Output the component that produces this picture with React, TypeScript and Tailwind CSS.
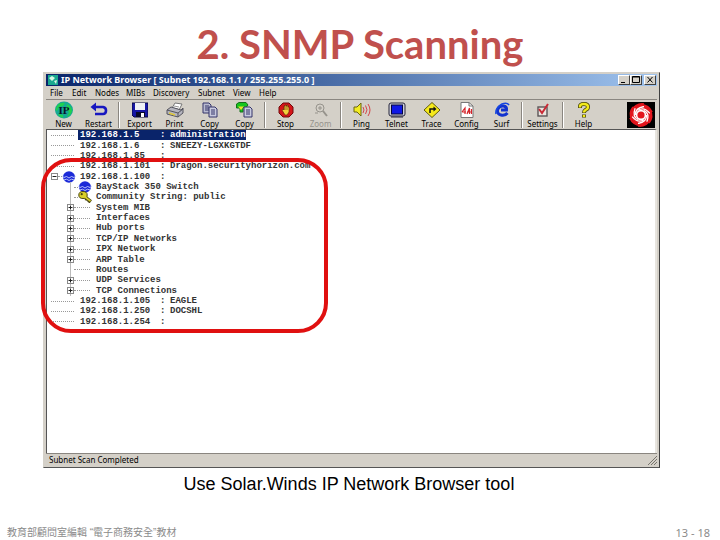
import type { ReactNode } from "react";

type TTool = {
	label: string;
	icon: ReactNode;
	disabled?: boolean;
};

type TNode = {
	text: string;
	name?: string;
	level: 0 | 1;
	expand?: "+" | "-";
	icon?: "router" | "key";
	selected?: boolean;
	host?: boolean;
};

const menus = [
	{ label: "File", width: "w-[22px]" },
	{ label: "Edit", width: "w-[23px]" },
	{ label: "Nodes", width: "w-[31px]" },
	{ label: "MIBs", width: "w-[27px]" },
	{ label: "Discovery", width: "w-[45px]" },
	{ label: "Subnet", width: "w-[35px]" },
	{ label: "View", width: "w-[26px]" },
	{ label: "Help", width: "w-[24px]" },
];

const NewIcon = () => (
	<svg viewBox="0 0 20 18" className="w-5 h-[18px]">
		<ellipse cx="10" cy="9" rx="9" ry="8.5" fill="#17a894" />
		<path
			d="M3 5 Q6 1 11 2 L9 5 L5 6 L3 10 L1.500 9Z M13 3 Q18 5 18 10 Q17 14 13 16 L15 11 L12 8Z M5 13 L9 14 L9 17 Q6 16 4 14Z"
			fill="#1fd04f"
		/>
		<text
			x="10"
			y="13"
			textAnchor="middle"
			fontSize="11"
			fontWeight="700"
			fontFamily="Liberation Serif, serif"
			fill="#06162b">
			IP
		</text>
	</svg>
);

const RestartIcon = () => (
	<svg viewBox="0 0 18 16" className="w-[18px] h-4">
		<path
			d="M4 5 H13 Q16 5.500 16 8.500 Q16 12 13 12 H5"
			fill="none"
			stroke="#1717c0"
			strokeWidth="2.600"
		/>
		<path d="M0.500 5 L6 .5 V9.500Z" fill="#1717c0" />
	</svg>
);

const ExportIcon = () => (
	<svg viewBox="0 0 16 16" className="w-4 h-4">
		<path d="M0 1 H16 V15 H2 L0 13Z" fill="#1717a5" />
		<path d="M0 1 H16 V15 H2 L0 13Z" fill="none" stroke="#080840" />
		<rect x="3" y="1" width="10" height="7" fill="#eef0f4" />
		<rect x="4" y="10" width="9" height="5" fill="#0a0a28" />
		<rect x="9" y="11" width="3" height="4" fill="#fff" />
	</svg>
);

const PrintIcon = () => (
	<svg viewBox="0 0 18 16" className="w-[18px] h-4">
		<path d="M6 6 L9 1 L16 2 L13 8Z" fill="#fff" stroke="#777" />
		<path d="M8 4 L13 5 M7 6 L12 7" stroke="#999" />
		<path d="M1 8 L5 5 L15 8 L17 6 V11 L12 15 L1 12Z" fill="#b5b5be" stroke="#55555f" />
		<path d="M1 8 L12 11 V15 M12 11 L17 7" fill="none" stroke="#55555f" />
		<path d="M3 11 L9 13" stroke="#e0c93a" strokeWidth="1.500" />
	</svg>
);

const CopyIcon = () => (
	<svg viewBox="0 0 18 16" className="w-[18px] h-4">
		<path d="M2 1 H8 L10 3 V11 H2Z" fill="#b9bbd0" stroke="#35356b" />
		<path d="M4 4 H8 M4 6 H8 M4 8 H8" stroke="#35356b" />
		<path d="M8 5 H14 L16 7 V15 H8Z" fill="#c8cade" stroke="#35356b" />
		<path d="M10 8 H14 M10 10 H14 M10 12 H14" stroke="#35356b" />
	</svg>
);

const CopyTreeIcon = () => (
	<svg viewBox="0 0 18 16" className="w-[18px] h-4">
		<path d="M0.500 2 L3 .5 H10 L12 3 L10 5.500 H7 V10 H4 V6 H.5Z" fill="#16c51d" stroke="#14701a" />
		<path d="M2 4.500 H8 L5 8Z" fill="#e9e62b" />
		<path d="M8 5 H14 L16 7 V15 H8Z" fill="#c8cade" stroke="#35356b" />
		<path d="M10 8 H14 M10 10 H14 M10 12 H14" stroke="#35356b" />
	</svg>
);

const StopIcon = () => (
	<svg viewBox="0 0 16 16" className="w-4 h-4">
		<path d="M5 1 H11 L15 5 V11 L11 15 H5 L1 11 V5Z" fill="#d5161a" stroke="#700a0c" />
		<path
			d="M4 8 L5 7 L6 8 V4 H7 V3 H8 V4 H9 V3 H10 V5 H11 V10 L9 13 H7Z"
			fill="#f2cf3c"
			stroke="#5b2407"
			strokeWidth=".6"
		/>
		<path d="M7 4 V8 M9 4 V8" stroke="#5b2407" strokeWidth=".6" />
	</svg>
);

const ZoomIcon = () => (
	<svg viewBox="0 0 16 16" className="w-4 h-4" fill="none" stroke="#96938c">
		<circle cx="7" cy="6" r="4" />
		<path d="M5 6 H9 M7 4 V8 M2 11 H5" />
		<path d="M10 9 L14 14" strokeWidth="2" />
	</svg>
);

const PingIcon = () => (
	<svg viewBox="0 0 18 16" className="w-[18px] h-4">
		<path d="M1 5 H4 L8 1 V14 L4 10 H1Z" fill="#f3ec22" stroke="#6a6410" />
		<path
			d="M10 5 Q12 8 10 11 M12.500 3.500 Q15.500 8 12.500 12 M15 2 Q19 8 15 14"
			fill="none"
			stroke="#d4474a"
		/>
	</svg>
);

const TelnetIcon = () => (
	<svg viewBox="0 0 18 16" className="w-[18px] h-4">
		<rect x="1" y="1" width="16" height="13" rx="2" fill="#cfd0da" stroke="#26263c" />
		<rect x="3.500" y="3" width="11" height="9" fill="#0f18e6" stroke="#06063c" />
		<path d="M3 15 H15" stroke="#26263c" />
	</svg>
);

const TraceIcon = () => (
	<svg viewBox="0 0 18 16" className="w-[18px] h-4">
		<path d="M9 0.500 L17 8 L9 15.500 L1 8Z" fill="#f6ea1c" stroke="#5f5a10" />
		<path d="M7 11 V7 H11" fill="none" stroke="#111" strokeWidth="1.500" />
		<path d="M10.500 4.500 L13.500 7 L10.500 9.500Z" fill="#111" />
	</svg>
);

const ConfigIcon = () => (
	<svg viewBox="0 0 16 16" className="w-4 h-4">
		<path d="M2 .5 H10 L14 4 V15.500 H2Z" fill="#fff" stroke="#777" />
		<path d="M10 .5 V4 H14" fill="none" stroke="#777" />
		<path
			d="M3 10 L6 6 V12 M3 10 H7 M8 12 L10.500 6 V12 M8 10 H13 M12.500 7 V12"
			fill="none"
			stroke="#d5262c"
			strokeWidth="1.200"
		/>
	</svg>
);

const SurfIcon = () => (
	<svg viewBox="0 0 18 16" className="w-[18px] h-4">
		<path
			d="M14.500 11 Q12 14 8 13 Q4 12 4.500 8 Q6 3.500 10.500 4 Q14 4.500 13.500 8 H8"
			fill="none"
			stroke="#1233cf"
			strokeWidth="3"
		/>
		<path d="M3 12 Q2 6 9 2 Q14 0 16 3" fill="none" stroke="#1646e0" strokeWidth="1.600" />
	</svg>
);

const SettingsIcon = () => (
	<svg viewBox="0 0 16 16" className="w-4 h-4">
		<rect x="3" y="5" width="9" height="9" fill="#e9e5df" stroke="#5c5657" strokeWidth="1.400" />
		<path d="M4 7 L7 11 L13 2" fill="none" stroke="#c92a35" strokeWidth="2" />
	</svg>
);

const HelpIcon = () => (
	<svg viewBox="0 0 16 18" className="w-4 h-[18px]" fill="none">
		<path
			d="M4 7 V5.500 Q4 3 8 3 Q12 3 12 6 Q12 8 9.500 9 Q8 10 8 12 M8 13.500 V16.500"
			stroke="#4a4709"
			strokeWidth="4"
		/>
		<path
			d="M4 6.500 V5.500 Q4 3 8 3 Q12 3 12 6 Q12 8 9.500 9 Q8 10 8 11.500 M8 14 V16"
			stroke="#f3ea1d"
			strokeWidth="2.400"
		/>
	</svg>
);

const SwirlLogo = () => (
	<svg viewBox="0 0 28 26" className="w-7 h-[26px] bg-black">
		<circle cx="14" cy="13" r="10.500" fill="#e3161d" />
		{[0, 60, 120, 180, 240, 300].map((a) => (
			<g key={a} transform={`rotate(${a} 14 13)`} fill="none">
				<path d="M5 8 Q9 1 17 2" stroke="#e3161d" strokeWidth="1.600" />
				<path d="M8.500 13 Q8 6 17 4.500" stroke="#fff" strokeWidth="1.300" />
			</g>
		))}
		<circle cx="14" cy="13" r="5.200" fill="#fff" />
		<circle cx="14" cy="13" r="3.600" fill="#e3161d" />
	</svg>
);

const RouterIcon = () => (
	<svg viewBox="0 0 14 12" className="w-3.5 h-3 mr-0.5 shrink-0">
		<ellipse cx="7" cy="6" rx="6" ry="5.800" fill="#1c2bd8" />
		<path
			d="M0 5 L2 6.500 L4.500 5.500 L7 7 L9.500 5.500 L12 6.500 L14 5 M2 9 L4.500 8.200 L7 9.500 L9.500 8.200 L12 9"
			fill="none"
			stroke="#c9d0ff"
			strokeWidth=".9"
		/>
	</svg>
);

const KeyIcon = () => (
	<svg viewBox="0 0 14 12" className="w-3.5 h-3 mr-0.5 shrink-0">
		<path d="M6 5 L13 10.500 M9 7 L8 9.500 M12 9 L10.500 11.500" stroke="#4b4610" strokeWidth="3" />
		<ellipse cx="5" cy="4" rx="4.200" ry="3.500" fill="#d9cf2a" stroke="#4b4610" />
		<path d="M6.500 5.500 L12.500 10.200" stroke="#d9cf2a" strokeWidth="1.600" />
		<circle cx="3.700" cy="3.200" r="1.100" fill="#4b4610" />
	</svg>
);

const toolGroups: TTool[][] = [
	[
		{ label: "New", icon: <NewIcon /> },
		{ label: "Restart", icon: <RestartIcon /> },
	],
	[
		{ label: "Export", icon: <ExportIcon /> },
		{ label: "Print", icon: <PrintIcon /> },
		{ label: "Copy", icon: <CopyIcon /> },
		{ label: "Copy", icon: <CopyTreeIcon /> },
	],
	[
		{ label: "Stop", icon: <StopIcon /> },
		{ label: "Zoom", icon: <ZoomIcon />, disabled: true },
	],
	[
		{ label: "Ping", icon: <PingIcon /> },
		{ label: "Telnet", icon: <TelnetIcon /> },
		{ label: "Trace", icon: <TraceIcon /> },
		{ label: "Config", icon: <ConfigIcon /> },
		{ label: "Surf", icon: <SurfIcon /> },
	],
	[{ label: "Settings", icon: <SettingsIcon /> }],
	[{ label: "Help", icon: <HelpIcon /> }],
];

const nodes: TNode[] = [
	{ text: "192.168.1.5", name: "administration", level: 0, host: true, selected: true },
	{ text: "192.168.1.6", name: "SNEEZY-LGXKGTDF", level: 0, host: true },
	{ text: "192.168.1.85", level: 0, host: true },
	{ text: "192.168.1.101", name: "Dragon.securityhorizon.com", level: 0, host: true },
	{ text: "192.168.1.100", level: 0, host: true, expand: "-", icon: "router" },
	{ text: "BayStack 350 Switch", level: 1, icon: "router" },
	{ text: "Community String: public", level: 1, icon: "key" },
	{ text: "System MIB", level: 1, expand: "+" },
	{ text: "Interfaces", level: 1, expand: "+" },
	{ text: "Hub ports", level: 1, expand: "+" },
	{ text: "TCP/IP Networks", level: 1, expand: "+" },
	{ text: "IPX Network", level: 1, expand: "+" },
	{ text: "ARP Table", level: 1, expand: "+" },
	{ text: "Routes", level: 1 },
	{ text: "UDP Services", level: 1, expand: "+" },
	{ text: "TCP Connections", level: 1, expand: "+" },
	{ text: "192.168.1.105", name: "EAGLE", level: 0, host: true },
	{ text: "192.168.1.250", name: "DOCSHL", level: 0, host: true },
	{ text: "192.168.1.254", level: 0, host: true },
];

const Expander = ({ sign }: { sign: "+" | "-" }) => (
	<button
		aria-label={sign === "+" ? "Expand" : "Collapse"}
		className="w-[7px] h-[7px] shrink-0 border border-[#8a8a8a] bg-white">
		<svg viewBox="0 0 5 5" className="block w-[5px] h-[5px]" stroke="#222">
			<path d={sign === "+" ? "M0.500 2.500 H4.500 M2.500 .5 V4.500" : "M0.500 2.500 H4.500"} />
		</svg>
	</button>
);

const TreeRow = ({ node }: { node: TNode }) => {
	const { text, name, level, expand, icon, selected, host } = node;
	return (
		<li className={`flex items-center min-h-0 ${level ? "pl-5" : "pl-1"}`}>
			<span className="flex items-center self-stretch shrink-0 w-[27px]">
				{level === 1 && (
					<span className="flex flex-col items-center self-stretch w-[7px]">
						<span className="grow border-l border-[#bbb]" />
						{expand && <Expander sign={expand} />}
						<span className="grow border-l border-[#bbb]" />
					</span>
				)}
				{level === 0 && expand && <Expander sign={expand} />}
				<span
					className={`grow border-t border-dotted border-[#999] ${icon ? "" : "mr-1"}`}
				/>
				{icon === "router" && <RouterIcon />}
				{icon === "key" && <KeyIcon />}
			</span>
			<span
				className={`flex items-center h-[10px] pl-0.5 ${
					selected ? "bg-[#0a246a] text-white" : ""
				}`}>
				<span className={host ? "w-[80px]" : ""}>{text}</span>
				{host && <span className="w-[10px]">:</span>}
				{name}
			</span>
		</li>
	);
};

const CaptionButton = ({ label, path }: { label: string; path: string }) => (
	<button
		aria-label={label}
		className="w-3 h-[10px] bg-[#d4d0c8] border border-t-white border-l-white border-r-[#404040] border-b-[#404040]">
		<svg viewBox="0 0 10 8" className="block w-[10px] h-2" fill="none" stroke="#000">
			<path d={path} />
		</svg>
	</button>
);

const BrowserWindow = () => (
	<section className="relative ml-[43px] mr-[60px] bg-[#d4d0c8] px-0.5 pt-px pb-0.5 border border-t-[#d4d0c8] border-l-[#d4d0c8] border-r-[#404040] border-b-[#555] font-['Noto_Sans','Liberation_Sans',sans-serif] text-[8px] leading-[10px] text-black">
		<header className="flex items-center h-3 bg-linear-to-r from-[#0a246a] to-[#a0c4ee] text-white pl-0.5 pr-px">
			<svg viewBox="0 0 10 10" className="w-[10px] h-[10px] mr-[3px]">
				<rect width="10" height="10" fill="#1aa88f" />
				<path d="M1 3 L4 1 L7 3 L4 6Z M6 6 L9 5 L8 9Z" fill="#d7f8e4" />
			</svg>
			<h2 className="grow text-[9px] font-bold whitespace-nowrap">
				IP Network Browser [ Subnet 192.168.1.1 / 255.255.255.0 ]
			</h2>
			<CaptionButton label="Minimize" path="M2 6.500 H6" />
			<CaptionButton label="Maximize" path="M1.500 1 H8.500 M1.500 .5 V6.500 H8.500 V.5Z" />
			<span className="w-0.5" />
			<CaptionButton label="Close" path="M2.500 1 L7.500 6.500 M7.500 1 L2.500 6.500" />
		</header>

		<nav className="flex items-center h-[13px] pl-1">
			{menus.map(({ label, width }) => (
				<button key={label} className={`${width} text-left whitespace-nowrap`}>
					{label}
				</button>
			))}
		</nav>

		<div className="flex items-center h-[30px] border-t border-[#8a8680] pr-0.5">
			{toolGroups.map((group, g) => (
				<div key={g} className="flex items-center">
					{g > 0 && (
						<span className="w-0.5 h-[26px] mx-0.5 border-l border-l-[#8a8680] border-r border-r-white" />
					)}
					{group.map(({ label, icon, disabled }, i) => (
						<button
							key={i}
							disabled={disabled}
							className="flex flex-col items-center w-[35px] disabled:text-[#96938c]">
							<span className="flex items-center justify-center h-[18px]">{icon}</span>
							<span className="h-[10px]">{label}</span>
						</button>
					))}
				</div>
			))}
			<span className="ml-auto">
				<SwirlLogo />
			</span>
		</div>

		<div className="min-h-[324px] bg-white border-t border-l border-[#555] border-r-2 border-r-[#e8e5df] font-['Liberation_Mono',monospace] text-[9px] font-bold text-[#333] whitespace-pre">
			<ul className="grid grid-rows-[repeat(19,minmax(0,1fr))] h-[197px]">
				{nodes.map((node) => (
					<TreeRow key={node.text} node={node} />
				))}
			</ul>
		</div>

		<footer className="flex items-center justify-between h-3 pl-[3px] border-t border-[#8a8680]">
			<span>Subnet Scan Completed</span>
			<svg viewBox="0 0 10 10" className="w-[10px] h-[10px]" stroke="#77746d">
				<path d="M1 10 L10 1 M4 10 L10 4 M7 10 L10 7" />
			</svg>
		</footer>

		{/* highlight around the expanded switch */}
		<div className="absolute -left-[3px] top-[85px] w-[287px] h-[175px] border-4 border-[#e01010] rounded-[30px] pointer-events-none" />
	</section>
);

const App = () => {
	return (
		<main className="flex flex-col min-h-screen bg-white">
			<h1 className="h-[72px] pt-5 text-center font-['Lato',sans-serif] font-bold text-[40px] leading-[48px] text-[#c0504d]">
				2. SNMP Scanning
			</h1>
			<BrowserWindow />
			<p className="mt-1.5 pr-[22px] text-center font-['Liberation_Sans',sans-serif] text-[18px] leading-5 text-black">
				Use Solar.Winds IP Network Browser tool
			</p>
			<footer className="flex items-center justify-between mt-auto pl-[7px] pr-[10px] h-3.5 text-[#8b8b8b]">
				<span className="font-['Liberation_Sans','Noto_Sans_CJK_TC',sans-serif] text-[10px] leading-3">
					教育部顧問室編輯 “電子商務安全”教材
				</span>
				<span className="font-['Noto_Sans',sans-serif] text-[11px] leading-3">13 - 18</span>
			</footer>
		</main>
	);
};

export default App;
